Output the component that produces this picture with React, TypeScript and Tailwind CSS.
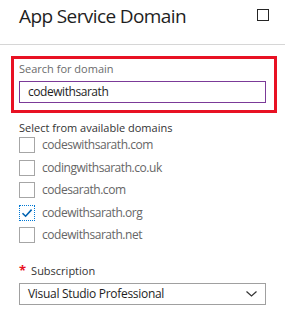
const domains = [
  { name: "codeswithsarath.com", checked: false },
  { name: "codingwithsarath.co.uk", checked: false },
  { name: "codesarath.com", checked: false },
  { name: "codewithsarath.org", checked: true },
  { name: "codewithsarath.net", checked: false },
];

export default function App() {
  return (
    <div className="w-[285px] h-[318px] bg-white font-['Open_Sans',sans-serif] overflow-hidden">
      <div className="h-[45px] flex items-start justify-between pl-[19px] pr-[16px] pt-[3px] border-b border-[#d6d6d6]">
        <h1 className="text-[19px] leading-[26px] text-[#1e1e1e] tracking-[-0.6px]">App Service Domain</h1>
        <div className="w-[12px] h-[12px] border-[1.5px] border-[#252525] mt-[6px]" />
      </div>

      <div className="px-[11px] pt-[11px]">
        <div className="w-[266px] h-[57px] border-[3px] border-[#e81123] pl-[5px] pt-[2px]">
          <div className="text-[11px] leading-[15px] text-[#6b6b6b]">Search for domain</div>
          <div className="mt-[5px] w-[247px] h-[22px] border border-[#7b3a98] flex items-center pl-[8px] text-[12px] tracking-[-0.45px] text-[#1e1e1e]">
            codewithsarath
          </div>
        </div>

        <div className="pl-[8px] mt-[7px]">
          <div className="text-[11px] leading-[15px] text-[#333333]">Select from available domains</div>
          <div className="flex flex-col mt-[-1px]">
            {domains.map((d) => (
              <div key={d.name} className="h-[22.5px] flex items-center gap-[7px]">
                {d.checked ? (
                  <div className="w-[16px] h-[16px] border border-dotted border-[#0078d4] flex items-center justify-center">
                    <svg width="12" height="12" viewBox="0 0 12 12">
                      <path d="M1.5 6.2 L4.6 9.2 L10.6 2.6" fill="none" stroke="#0063b1" strokeWidth="1.6" />
                    </svg>
                  </div>
                ) : (
                  <div className="w-[16px] h-[16px] border border-[#a6a6a6] bg-white" />
                )}
                <span className="text-[12px] tracking-[-0.45px] text-[#666666]">{d.name}</span>
              </div>
            ))}
          </div>

          <div className="mt-[16px] flex items-center gap-[5px] text-[11px] leading-[15px] text-[#333333]">
            <span className="text-[#e81123] text-[13px] leading-[15px] font-bold">*</span>
            <span>Subscription</span>
          </div>
          <div className="mt-[5px] w-[247px] h-[22px] border border-[#a0a0a0] flex items-center justify-between pl-[8px] pr-[8px] text-[12px] text-[#1e1e1e]">
            <span className="tracking-[-0.3px]">Visual Studio Professional</span>
            <svg width="11" height="6" viewBox="0 0 11 6">
              <path d="M0.5 0.5 L5.5 5 L10.5 0.5" fill="none" stroke="#333333" strokeWidth="1.2" />
            </svg>
          </div>
        </div>
      </div>
    </div>
  );
}
